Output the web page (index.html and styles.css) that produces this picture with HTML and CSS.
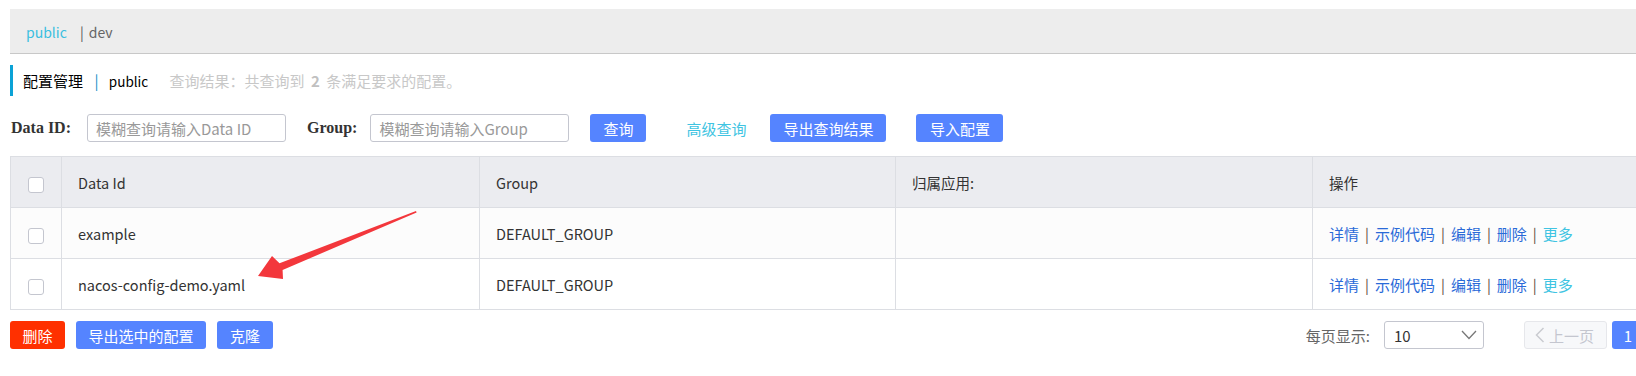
FILE: index.html
```html
<!DOCTYPE html>
<html>
	<head>
		<meta charset="utf-8">
		<title>配置管理</title>
		<link rel="stylesheet" href="styles.css">
	</head>
	<body>
		<div class="page">
			<div class="ns-bar">
				<span class="ns-current">public</span>
				<span class="ns-sep">|</span>
				<span class="ns-item">dev</span>
			</div>

			<div class="title-row">
				<span class="title-main">配置管理</span>
				<span class="title-sep">|</span>
				<span class="title-ns">public</span>
				<span class="title-result">查询结果：共查询到 <b>2</b> 条满足要求的配置。</span>
			</div>

			<div class="search-row">
				<label class="search-label">Data ID:</label>
				<input type="text" class="search-input input-dataid" placeholder="模糊查询请输入Data ID" />
				<label class="search-label label-group">Group:</label>
				<input type="text" class="search-input input-group" placeholder="模糊查询请输入Group" />
				<button class="btn btn-primary btn-query">查询</button>
				<a class="link-advanced">高级查询</a>
				<button class="btn btn-primary btn-export">导出查询结果</button>
				<button class="btn btn-primary btn-import">导入配置</button>
			</div>

			<table class="config-table">
				<colgroup>
					<col style="width: 51px">
					<col style="width: 418px">
					<col style="width: 416px">
					<col style="width: 417px">
					<col>
				</colgroup>
				<thead>
					<tr>
						<th class="cell-check"><span class="checkbox"></span></th>
						<th>Data Id</th>
						<th>Group</th>
						<th>归属应用:</th>
						<th>操作</th>
					</tr>
				</thead>
				<tbody>
					<tr class="row-odd">
						<td class="cell-check"><span class="checkbox"></span></td>
						<td>example</td>
						<td>DEFAULT_GROUP</td>
						<td></td>
						<td class="actions">
							<a>详情</a><span class="sep">|</span><a>示例代码</a><span class="sep">|</span><a>编辑</a><span class="sep">|</span><a>删除</a><span class="sep">|</span><a class="more">更多</a>
						</td>
					</tr>
					<tr>
						<td class="cell-check"><span class="checkbox"></span></td>
						<td>nacos-config-demo.yaml</td>
						<td>DEFAULT_GROUP</td>
						<td></td>
						<td class="actions">
							<a>详情</a><span class="sep">|</span><a>示例代码</a><span class="sep">|</span><a>编辑</a><span class="sep">|</span><a>删除</a><span class="sep">|</span><a class="more">更多</a>
						</td>
					</tr>
				</tbody>
			</table>

			<div class="bottom-row">
				<div class="bulk-actions">
					<button class="btn btn-danger btn-delete">删除</button>
					<button class="btn btn-primary btn-export-sel">导出选中的配置</button>
					<button class="btn btn-primary btn-clone">克隆</button>
				</div>
				<div class="pager">
					<span class="pager-label">每页显示:</span>
					<div class="page-size">
						<span>10</span>
						<svg width="16" height="10" viewBox="0 0 16 10"><polyline points="1,1 8,8.5 15,1" fill="none" stroke="#777" stroke-width="1.3"/></svg>
					</div>
					<button class="pager-btn pager-prev">
						<svg width="10" height="16" viewBox="0 0 10 16"><polyline points="8.5,1 1.5,8 8.5,15" fill="none" stroke="#c9cbd0" stroke-width="1.5"/></svg>
						上一页
					</button>
					<button class="pager-btn pager-current">1</button>
					<button class="pager-btn pager-next">下一页</button>
				</div>
			</div>

			<svg class="annotation" width="1636" height="376" viewBox="0 0 1636 376">
				<polygon points="258,276 272,256 279.5,263.3 416,211 416.6,212.4 282.6,270 283,279" fill="#f3373c"/>
			</svg>
		</div>
	</body>
</html>
```

FILE: styles.css
```css
body	{
	margin: 0;
	overflow: hidden;
	background: #fff;
	font-family: "Noto Sans CJK SC", "Noto Sans", sans-serif;
	font-size: 14px;
	color: #333;
}
.page	{
	position: relative;
	width: 1722px;
	padding: 9px 0 0 10px;
}

/* namespace bar */
.ns-bar	{
	height: 44px;
	line-height: 46px;
	padding-left: 16px;
	background: #ededed;
	border-bottom: 1px solid #c8c8c8;
	font-size: 14px;
}
.ns-current	{
	color: #3bbfe0;
}
.ns-sep	{
	margin: 0 2px 0 10px;
	color: #555;
}
.ns-item	{
	color: #666;
}

/* title */
.title-row	{
	margin-top: 11px;
	height: 31px;
	line-height: 31px;
	padding-left: 10px;
	border-left: 3px solid #0ba2d6;
	font-size: 15px;
	color: #000;
}
.title-sep	{
	margin: 0 7px 0 8px;
	color: #1a8fc8;
}
.title-ns	{
	font-size: 13.5px;
}
.title-result	{
	margin-left: 18px;
	color: #c8c8c8;
	font-size: 15px;
}
.title-result b	{
	color: #c0c0c0;
	margin: 0 3px;
}

/* search */
.search-row	{
	display: flex;
	align-items: center;
	margin-top: 18px;
	height: 28px;
}
.search-label	{
	font-family: "Liberation Serif", serif;
	font-weight: bold;
	font-size: 16px;
	color: #333;
	margin: 0 16px 0 1px;
}
.label-group	{
	margin-left: 21px;
	margin-right: 13px;
}
.search-input	{
	box-sizing: border-box;
	height: 28px;
	padding: 0 8px;
	border: 1px solid #c4c6cf;
	border-radius: 3px;
	font-family: "Noto Sans CJK SC", sans-serif;
	font-size: 15px;
	outline: none;
}
.search-input::placeholder	{
	color: #999;
}
.input-dataid	{
	width: 199px;
}
.input-group	{
	width: 199px;
}
.btn	{
	box-sizing: border-box;
	height: 28px;
	padding: 0;
	border: none;
	border-radius: 3px;
	font-family: "Noto Sans CJK SC", sans-serif;
	font-size: 15px;
	color: #fff;
	white-space: nowrap;
	cursor: pointer;
}
.btn-primary	{
	background: #5584ff;
}
.btn-danger	{
	background: #ff3000;
}
.btn-query	{
	margin-left: 21px;
	width: 56px;
}
.link-advanced	{
	margin-left: 40px;
	font-size: 15px;
	color: #40c4e2;
	white-space: nowrap;
}
.btn-export	{
	margin-left: 24px;
	width: 116px;
}
.btn-import	{
	margin-left: 30px;
	width: 87px;
}

/* table */
.config-table	{
	margin-top: 14px;
	width: 100%;
	table-layout: fixed;
	border-collapse: collapse;
	border: 1px solid #dcdee3;
}
.config-table th,
.config-table td	{
	height: 50px;
	padding: 0 16px;
	border: 1px solid #dcdee3;
	text-align: left;
	font-weight: normal;
	font-size: 14.5px;
	color: #333;
}
.config-table th	{
	background: #ebecf0;
}
.row-odd td	{
	background: #fcfcfc;
}
.config-table .cell-check	{
	padding: 0;
	text-align: center;
}
.checkbox	{
	display: inline-block;
	box-sizing: border-box;
	width: 16px;
	height: 16px;
	margin-top: 3px;
	border: 1px solid #c4c6cf;
	border-radius: 3px;
	background: #fff;
	vertical-align: middle;
}
.actions	{
	white-space: nowrap;
}
.actions a	{
	color: #2a6ad8;
	font-size: 15px;
}
.actions .more	{
	color: #40c4e2;
}
.actions .sep	{
	margin: 0 6px;
	color: #5a4a3a;
}

/* bottom */
.bottom-row	{
	display: flex;
	justify-content: space-between;
	align-items: center;
	margin-top: 11px;
}
.bulk-actions	{
	display: flex;
	gap: 11px;
}
.btn-delete	{
	width: 55px;
}
.btn-export-sel	{
	width: 130px;
}
.btn-clone	{
	width: 56px;
}
.pager	{
	display: flex;
	align-items: center;
}
.pager-label	{
	color: #666;
	font-size: 15px;
	margin-right: 14px;
}
.page-size	{
	box-sizing: border-box;
	display: flex;
	justify-content: space-between;
	align-items: center;
	width: 100px;
	height: 28px;
	padding: 0 6px 0 9px;
	border: 1px solid #c4c6cf;
	border-radius: 3px;
	font-size: 15px;
	color: #333;
}
.pager-btn	{
	box-sizing: border-box;
	height: 28px;
	border-radius: 3px;
	font-family: "Noto Sans CJK SC", sans-serif;
	font-size: 15px;
	white-space: nowrap;
}
.pager-prev	{
	display: flex;
	align-items: center;
	gap: 4px;
	margin-left: 40px;
	width: 83px;
	padding: 0 10px;
	background: #f7f8fa;
	border: 1px solid #e6e7eb;
	color: #c4c6cf;
}
.pager-current	{
	margin-left: 5px;
	width: 32px;
	border: none;
	background: #5584ff;
	color: #fff;
}
.pager-next	{
	margin-left: 5px;
	width: 83px;
	background: #fff;
	border: 1px solid #c4c6cf;
	color: #333;
}

/* arrow drawn over the table */
.annotation	{
	position: absolute;
	left: 0;
	top: 0;
	pointer-events: none;
}
```
